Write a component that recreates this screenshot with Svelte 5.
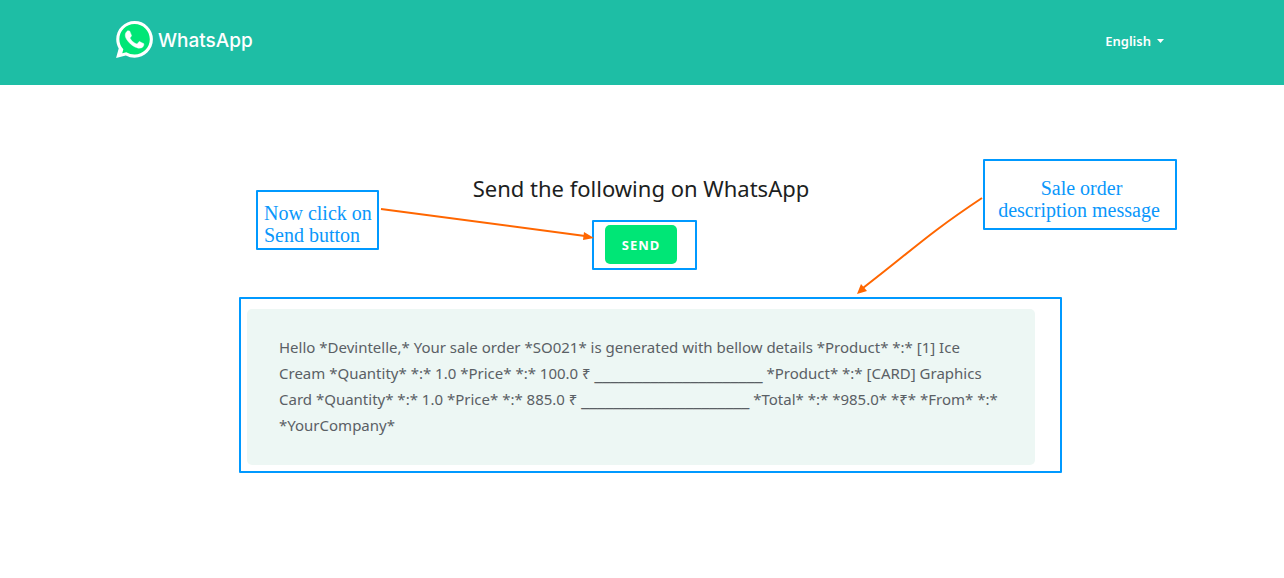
<script>
  const rule = '_'.repeat(21);
  const lines = [
    ['Hello *Devintelle,* Your sale order *SO021* is generated with bellow details *Product* *:* [1] Ice'],
    ['Cream *Quantity* *:* 1.0 *Price* *:* 100.0 ₹ ', ' *Product* *:* [CARD] Graphics'],
    ['Card *Quantity* *:* 1.0 *Price* *:* 885.0 ₹ ', ' *Total* *:* *985.0* *₹* *From* *:*'],
    ['*YourCompany*']
  ];
</script>

<header>
  <div class="bar">
    <a class="brand" href="#home">
      <svg width="37" height="37" viewBox="0 0 24 24" aria-hidden="true">
        <path fill="#fff" d="M20.464 3.488A11.815 11.815 0 0 0 12.05 0C5.495 0 .16 5.335.157 11.892c0 2.096.547 4.142 1.588 5.945L.057 24l6.305-1.654a11.882 11.882 0 0 0 5.683 1.448h.005c6.554 0 11.89-5.335 11.893-11.893a11.821 11.821 0 0 0-3.48-8.413z" />
        <path fill="#00e676" d="M12.05 21.785a9.87 9.87 0 0 1-5.395-1.592l-2.6.7.7-2.5A9.86 9.86 0 0 1 2.16 11.9c0-5.45 4.436-9.884 9.888-9.884 5.45 0 9.881 4.43 9.881 9.892 0 5.45-4.437 9.877-9.879 9.877z" />
        <path fill="#fff" stroke="#fff" stroke-width=".3" d="M17.472 14.382c-.297-.149-1.758-.867-2.03-.967-.273-.099-.471-.148-.67.15-.197.297-.767.966-.94 1.164-.173.199-.347.223-.644.075-.297-.15-1.255-.463-2.39-1.475-.883-.788-1.48-1.761-1.653-2.059-.173-.297-.018-.458.13-.606.134-.133.298-.347.446-.52.149-.174.198-.298.298-.497.099-.198.05-.371-.025-.52-.075-.149-.669-1.612-.916-2.207-.242-.579-.487-.5-.669-.51-.173-.008-.371-.01-.57-.01-.198 0-.52.074-.792.372-.272.297-1.04 1.016-1.04 2.479 0 1.462 1.065 2.875 1.213 3.074.149.198 2.096 3.2 5.077 4.487.709.306 1.262.489 1.694.625.712.227 1.36.195 1.871.118.571-.085 1.758-.719 2.006-1.413.248-.694.248-1.289.173-1.413-.074-.124-.272-.198-.57-.347" />
      </svg>
      <span>WhatsApp</span>
    </a>
    <button class="language" type="button">
      English
      <svg width="7" height="4" viewBox="0 0 7 4" aria-hidden="true"><path fill="#fff" d="M0 0h7L3.500 4z" /></svg>
    </button>
  </div>
</header>

<main>
  <h1>Send the following on WhatsApp</h1>
  <button class="send" type="button">SEND</button>
  <p class="message">
    {#each lines as [before, after]}
      <span class="line">{before}{#if after}<span class="rule">{rule}</span>{after}{/if}</span>
    {/each}
  </p>

  <div class="frame around-send"></div>
  <div class="frame around-message"></div>
  <div class="frame note note-send">Now click on<br />Send button</div>
  <div class="frame note note-message">&nbsp;Sale order<br />description message</div>
  <svg class="arrows" width="620" height="100" viewBox="380 196 620 100" aria-hidden="true">
    <g fill="none" stroke="#ff6600" stroke-width="2">
      <path d="M381 209L585 236" />
      <path d="M982 198C925 236 915 248 863 288" />
    </g>
    <path fill="#ff6600" d="M594 238L583 240L584 232zM857 294L861 284L867 291z" />
  </svg>
</main>

<style>
  :global(body) {
    margin: 0;
    background: #fff;
    font-family: "Noto Sans", sans-serif;
  }

  button {
    border: 0;
    font-family: inherit;
    cursor: pointer;
  }

  header {
    background: #1ebea5;
    color: #fff;
  }

  .bar {
    display: flex;
    align-items: center;
    justify-content: space-between;
    box-sizing: border-box;
    max-width: 1052px;
    min-height: 85px;
    margin: 0 auto;
    padding-bottom: 3px;
  }

  .brand {
    display: flex;
    align-items: flex-start;
    gap: 5px;
    color: #fff;
    font: 500 19px/40px Inter, sans-serif;
    text-decoration: none;
  }

  .language {
    display: flex;
    align-items: center;
    gap: 6px;
    padding: 0 4px;
    background: none;
    color: #fff;
    font-size: 13px;
    font-weight: 600;
    line-height: 20px;
  }

  main {
    position: relative;
    display: flex;
    flex-direction: column;
    align-items: center;
    max-width: 788px;
    margin: 0 auto;
    padding: 87px 2px 64px 0;
  }

  h1 {
    margin: 0;
    color: #1c1e21;
    font-size: 22px;
    font-weight: 400;
    line-height: 32px;
  }

  .send {
    margin: 21px 0 45px;
    padding: 1px 17px 0;
    border-radius: 5px;
    background: #00e676;
    color: #fff;
    font-size: 13px;
    font-weight: 700;
    letter-spacing: 1px;
    line-height: 38px;
  }

  .message {
    box-sizing: border-box;
    width: 100%;
    margin: 0;
    padding: 25px 32px 27px;
    border-radius: 5px;
    background: #edf7f4;
    color: #5a6065;
    font-size: 15px;
    line-height: 26px;
  }

  .line {
    display: block;
  }

  .rule {
    font-family: "DejaVu Sans", sans-serif;
    font-size: 16px;
    line-height: 16px;
  }

  .frame {
    position: absolute;
    box-sizing: border-box;
    border: 2px solid #0099ff;
    border-radius: 1px;
    pointer-events: none;
  }

  .around-send {
    top: 135px;
    left: 345px;
    width: 105px;
    height: 50px;
  }

  .around-message {
    top: 212px;
    left: -8px;
    width: 823px;
    height: 176px;
  }

  .note {
    color: #0a97fb;
    font: 20px/22px "Liberation Serif", serif;
    white-space: nowrap;
  }

  .note-send {
    top: 105px;
    left: 9px;
    width: 123px;
    padding: 10px 6px 2px;
  }

  .note-message {
    top: 74px;
    left: 736px;
    width: 194px;
    height: 71px;
    padding: 16px 12px 0 10px;
    text-align: center;
  }

  .arrows {
    position: absolute;
    top: 111px;
    left: 133px;
    pointer-events: none;
  }
</style>
